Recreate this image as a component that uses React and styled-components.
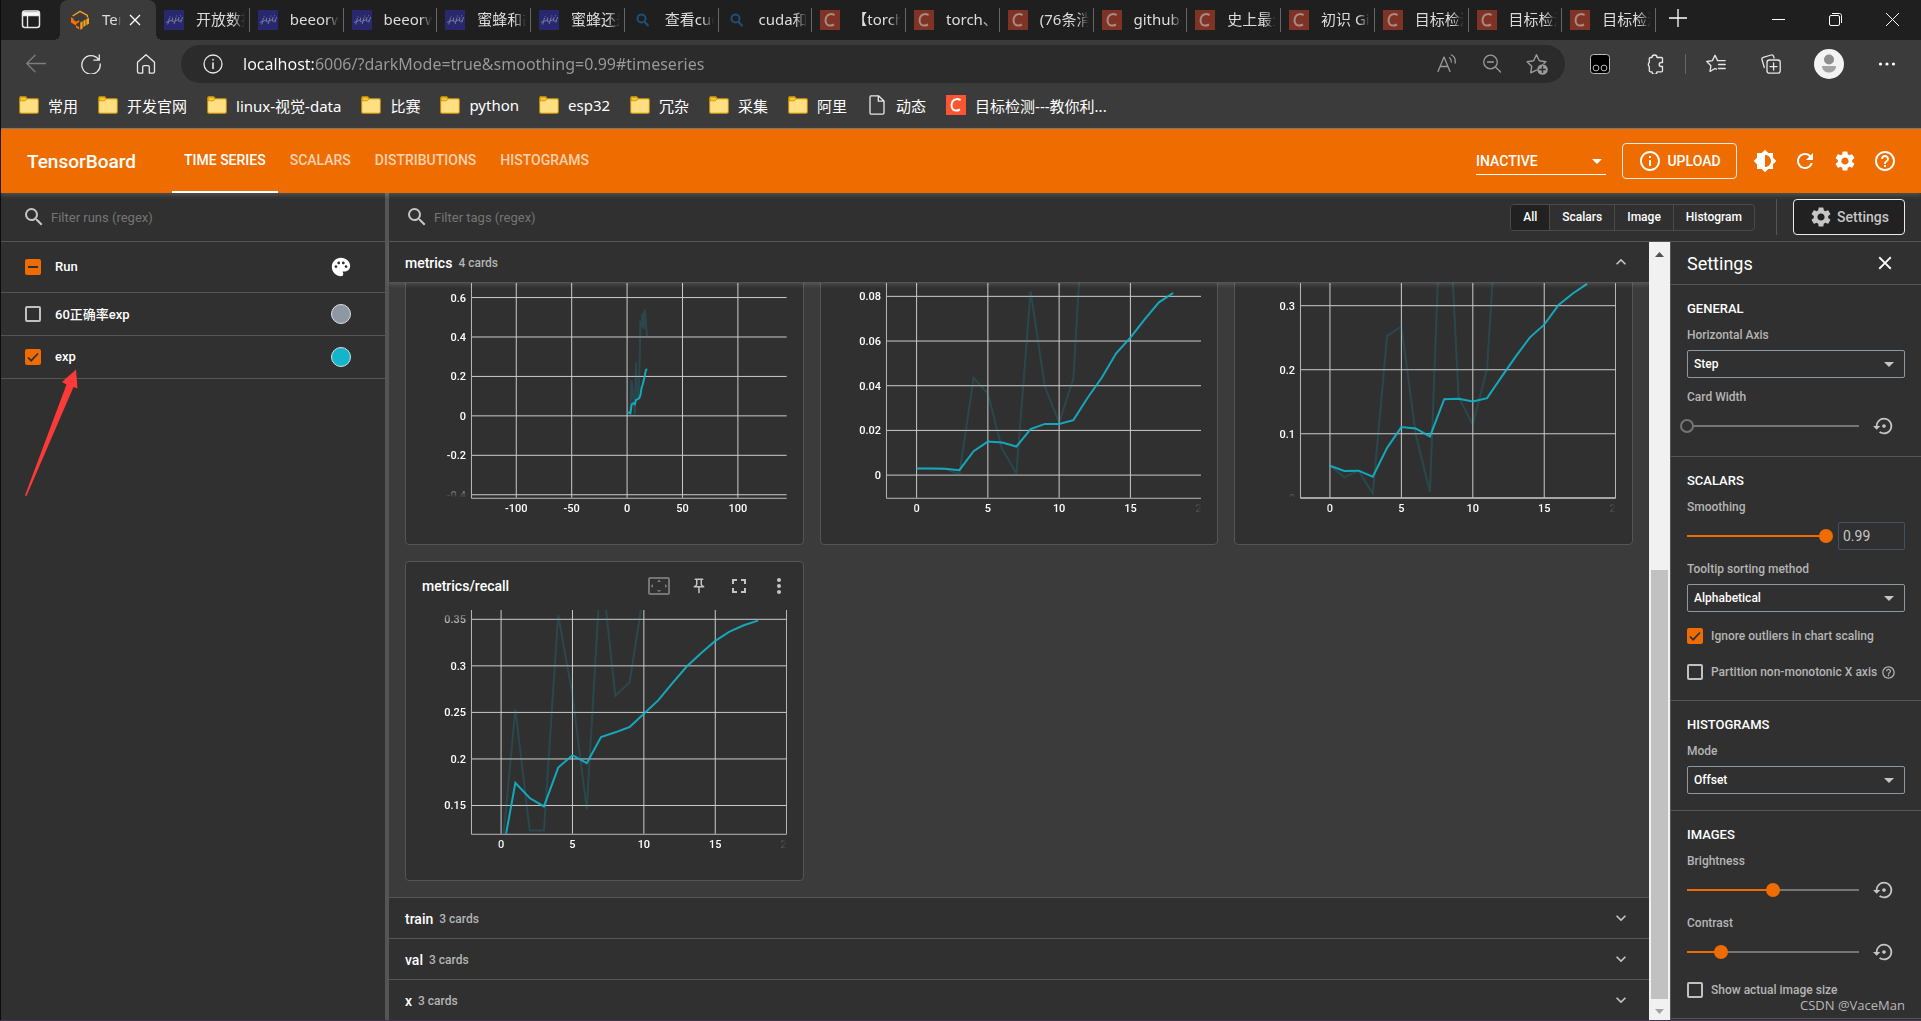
import React from "react";
import styled, { createGlobalStyle } from "styled-components";
import {
  MdSearch,
  MdPalette,
  MdBrightness6,
  MdRefresh,
  MdSettings,
  MdHelpOutline,
  MdInfoOutline,
  MdClose,
  MdExpandMore,
  MdExpandLess,
  MdFullscreen,
  MdMoreVert,
  MdOutlinePushPin,
  MdSettingsBackupRestore,
  MdSettingsOverscan,
  MdArrowDropDown,
} from "react-icons/md";

const GlobalStyle = createGlobalStyle`
  * {
    box-sizing: border-box;
  }

  body {
    margin: 0;
    background: #0b0b12;
    color: #fff;
    font-family: Roboto, "Noto Sans CJK SC", sans-serif;
    font-size: 13px;
  }

  button, input, select {
    font-family: inherit;
    color: inherit;
    margin: 0;
  }

  button {
    background: none;
    border: 0;
    padding: 0;
    cursor: pointer;
  }
`;

const line = "#555";

const Window = styled.div`
  display: flex;
  flex-direction: column;
  height: 100vh;
  padding-left: 1px;
  border-bottom: 1px solid #43364a;
  overflow: hidden;
`;

/* ---------- browser chrome ---------- */

const Browser = styled.div`
  flex: none;
  background: #3b3b3b;
  border-bottom: 1px solid #777;
  font-family: "Noto Sans", "Noto Sans CJK SC", sans-serif;
  font-size: 15px;
`;

const TabStrip = styled.div`
  display: flex;
  height: 40px;
  background: #1f1f1f;
`;

const TabMenuButton = styled.button`
  width: 59px;
  padding-top: 2px;
`;

const ActiveTab = styled.div`
  position: relative;
  display: flex;
  align-items: center;
  width: 96px;
  padding: 0 15px 0 10px;
  background: #3b3b3b;
  border-radius: 8px 8px 0 0;

  &::before,
  &::after {
    content: "";
    position: absolute;
    bottom: 0;
    width: 6px;
    height: 6px;
  }

  &::before {
    right: 100%;
    background: radial-gradient(circle at 0 0, #1f1f1f 6px, #3b3b3b 6px);
  }

  &::after {
    left: 100%;
    background: radial-gradient(circle at 100% 0, #1f1f1f 6px, #3b3b3b 6px);
  }
`;

const Tab = styled.div`
  display: flex;
  flex: 1;
  align-items: center;
  min-width: 0;
  padding-left: 8px;

  &::after {
    content: "";
    width: 1px;
    height: 24px;
    margin-left: 4px;
    background: #666;
  }
`;

const TabTitle = styled.span`
  flex: 1;
  min-width: 0;
  margin: 0 ${(p) => (p.$closable ? 8 : 0)}px 0 12px;
  padding-bottom: 2px;
  overflow: hidden;
  white-space: nowrap;
  line-height: 24px;
  color: #ddd;
  mask-image: linear-gradient(90deg, #000 75%, transparent);
`;

const WindowButtons = styled.div`
  display: flex;
  width: 265px;
  justify-content: space-between;
`;

const WindowButton = styled.button`
  width: ${(p) => (p.$wide ? "57px" : "44px")};
`;

const Toolbar = styled.div`
  display: flex;
  align-items: center;
  gap: 15px;
  height: 48px;
  padding: 0 14px 0 15px;
`;

const ToolButton = styled.button`
  display: flex;
  align-items: center;
  justify-content: center;
  width: ${(p) => p.$width || 40}px;
  height: 32px;
`;

const ToolDivider = styled.span`
  width: 1px;
  height: 20px;
  margin: 0 -5px;
  background: #666;
`;

const AddressBar = styled.label`
  display: flex;
  flex: 1;
  align-items: center;
  gap: 15px;
  height: 38px;
  padding: 0 13px 0 22px;
  border-radius: 19px;
  background: #2b2b2b;
`;

const AddressInput = styled.input`
  flex: 1;
  min-width: 0;
  padding: 0 5px;
  border: 0;
  outline: 0;
  font-size: 16px;
  color: #9a9a9a;
  background: linear-gradient(90deg, #fff 76px, #9a9a9a 76px);
  background-clip: text;
  -webkit-text-fill-color: transparent;
`;

const Bookmarks = styled.nav`
  display: flex;
  align-items: center;
  height: 40px;
  padding: 0 8px 6px;
`;

const Bookmark = styled.a`
  display: flex;
  align-items: center;
  gap: 9px;
  padding: 0 10px;
  color: #fff;
  text-decoration: none;
  white-space: nowrap;
`;

/* ---------- app header ---------- */

const Header = styled.header`
  position: relative;
  z-index: 3;
  display: flex;
  flex: none;
  align-items: center;
  height: 64px;
  padding: 0 16px 0 26px;
  background: #ef6c00;
  box-shadow: 0 2px 5px rgba(255, 255, 255, 0.18);
`;

const Brand = styled.h1`
  margin: 0 24px 0 0;
  width: 121px;
  font-size: 19px;
  font-weight: 500;
`;

const NavLink = styled.a`
  height: 64px;
  padding: 0 12px;
  border-bottom: 2px solid ${(p) => (p.$active ? "#fff" : "transparent")};
  line-height: 62px;
  font-size: 14px;
  font-weight: 500;
  text-transform: uppercase;
  text-decoration: none;
  color: ${(p) => (p.$active ? "#fff" : "rgba(255, 255, 255, 0.7)")};
`;

const Spacer = styled.span`
  flex: 1;
`;

const Stack = styled.span`
  display: grid;
  align-items: center;

  > * {
    grid-area: 1 / 1;
  }

  > svg {
    justify-self: end;
    pointer-events: none;
  }
`;

const InactiveSelect = styled.select`
  width: 130px;
  height: 28px;
  appearance: none;
  background: none;
  border: 0;
  border-bottom: 1px solid #fff;
  padding: 0;
  border-radius: 0;
  font-size: 14px;
  font-weight: 500;

  & + svg {
    margin-right: -3px;
  }
`;

const UploadButton = styled.button`
  display: flex;
  align-items: center;
  justify-content: center;
  gap: 5px;
  width: 115px;
  height: 36px;
  margin: 0 8px 0 16px;
  border: 1px solid #ebebeb;
  border-radius: 4px;
  font-size: 14px;
  font-weight: 500;
`;

const IconButton = styled.button`
  display: flex;
  align-items: center;
  justify-content: center;
  width: ${(p) => p.$width || 40}px;
  height: 40px;
  color: ${(p) => p.$color || "#fff"};
`;

/* ---------- layout ---------- */

const Body = styled.div`
  display: flex;
  flex: 1;
  min-height: 0;
  background: #303030;
`;

const Sidebar = styled.aside`
  position: relative;
  width: 20%;
`;

const Resizer = styled.div`
  width: 4px;
  background: #555;
`;

const Main = styled.main`
  display: flex;
  flex: 1;
  flex-direction: column;
  min-width: 0;
`;

const FilterBar = styled.div`
  display: flex;
  align-items: center;
  height: 49px;
  padding: 0 16px 0 ${(p) => p.$inset || 16}px;
  border-bottom: 1px solid ${line};
`;

const Filter = styled.label`
  display: flex;
  flex: 1;
  align-items: center;
  gap: 5px;
  color: #c5c5c5;
`;

const FilterInput = styled.input`
  flex: 1;
  min-width: 0;
  padding: 0;
  border: 0;
  outline: 0;
  background: none;
  font-size: 13px;

  &::placeholder {
    color: #757575;
  }
`;

/* ---------- runs ---------- */

const RunsTable = styled.table`
  width: 100%;
  border-collapse: collapse;
`;

const RunRow = styled.tr`
  height: ${(p) => (p.$head ? 50 : 43)}px;
  border-bottom: 1px solid ${line};
`;

const RunCell = styled.td`
  padding: 0;
  text-align: left;
  font-weight: 500;
  font-size: 13px;
`;

const CheckCell = styled(RunCell)`
  width: 54px;
  padding-left: 24px;
`;

const ColorCell = styled(RunCell)`
  width: 57px;
  padding-left: 2px;

  > * {
    display: block;
  }
`;

const Swatch = styled.button`
  width: 20px;
  height: 20px;
  margin-left: 1px;
  border: 1px solid #ddd;
  border-radius: 50%;
  background: ${(p) => p.$color};
`;

const CheckStack = styled(Stack)`
  width: 16px;
  height: 16px;
`;

const Box = styled.input`
  width: 16px;
  height: 16px;
  appearance: none;
  border: 2px solid #c1c1c1;
  border-radius: 2px;

  &:checked,
  &:indeterminate {
    background: #ef6c00;
    border-color: #ef6c00;
  }
`;

const Arrow = styled.svg`
  position: absolute;
  left: 23px;
  top: 175px;
  pointer-events: none;
`;

/* ---------- tag filter ---------- */

const ToggleGroup = styled.div`
  display: flex;
  height: 27px;
  margin-right: 21px;
  border: 1px solid #4a4a4a;
  border-radius: 4px;
  overflow: hidden;
`;

const Toggle = styled.button`
  padding: 0 12px;
  font-size: 12px;
  font-weight: 500;
  background: ${(p) => (p.$active ? "#212121" : "none")};

  & + & {
    border-left: 1px solid #4a4a4a;
  }
`;

const SettingsToggle = styled.button`
  display: flex;
  align-items: center;
  justify-content: center;
  gap: 4px;
  width: 112px;
  height: 36px;
  border: 1px solid #ebebeb;
  border-radius: 4px;
  background: #212121;
  color: #c5c5c5;
  font-size: 14px;
  font-weight: 500;
`;

const BarDivider = styled.span`
  width: 1px;
  height: 36px;
  margin-right: 16px;
  background: ${line};
`;

const Content = styled.div`
  display: flex;
  flex: 1;
  min-height: 0;
`;

const CardArea = styled.div`
  display: flex;
  flex: 1;
  flex-direction: column;
  min-width: 0;
`;

const GroupHeader = styled.button`
  display: flex;
  flex: none;
  align-items: center;
  gap: 6px;
  height: 41px;
  padding: 0 18px 0 16px;
  border-${(p) => (p.$open ? "bottom" : "top")}: 1px solid ${line};
  background: #303030;
  position: relative;
  z-index: 1;
  box-shadow: ${(p) => (p.$open ? "0 2px 4px rgba(255, 255, 255, 0.14)" : "none")};

  > svg {
    margin-left: auto;
    color: #c5c5c5;
  }
`;

const GroupName = styled.span`
  padding-top: 2px;
  font-size: 14px;
  font-weight: 500;
`;

const GroupCount = styled.span`
  padding-top: 2px;
  font-size: 12px;
  font-weight: 500;
  color: #b5b5b5;
`;

const GroupBody = styled.div`
  display: flex;
  flex: 1;
  flex-direction: column;
  justify-content: flex-end;
  min-height: 0;
  overflow: hidden;
  background: #3b3b3b;
`;

const CardGrid = styled.div`
  display: grid;
  grid-template-columns: repeat(3, 1fr);
  gap: 16px;
  padding: 16px;
`;

const Card = styled.article`
  height: 320px;
  padding: 4px 4px 16px 16px;
  border: 1px solid ${line};
  border-radius: 4px;
  background: #303030;
`;

const CardHeader = styled.div`
  display: flex;
  align-items: center;
  height: 40px;
  margin-bottom: 4px;
`;

const CardTitle = styled.h2`
  flex: 1;
  margin: 0;
  font-size: 14px;
  font-weight: 500;
`;

const Plot = styled.svg`
  display: block;
  width: calc(100% - 12px);
  overflow: hidden;
  font-size: 11px;
  font-weight: 500;
  fill: #fff;
`;

const Scrollbar = styled.div`
  display: flex;
  flex-direction: column;
  align-items: center;
  width: 21px;
  background: #f1f1f1;
`;

const ScrollButton = styled.button`
  width: 100%;
  height: 21px;
  color: ${(p) => (p.$dim ? "#a3a3a3" : "#505050")};
`;

const ScrollTrack = styled.div`
  display: flex;
  flex: 1;
  flex-direction: column;
  width: 17px;

  &::before {
    content: "";
    flex: 5;
  }
`;

const ScrollThumb = styled.div`
  flex: 7;
  background: #c1c1c1;
`;

/* ---------- settings pane ---------- */

const Pane = styled.aside`
  position: relative;
  width: 251px;
  border-left: 1px solid ${line};
  overflow: hidden;
`;

const PaneHeader = styled.div`
  display: flex;
  align-items: center;
  justify-content: space-between;
  height: 43px;
  padding: 0 16px;
  border-bottom: 1px solid ${line};
`;

const PaneTitle = styled.h2`
  margin: 0;
  font-size: 18px;
  font-weight: 400;
`;

const Section = styled.section`
  padding: 16px;
  border-bottom: 1px solid ${line};
`;

const SectionTitle = styled.h3`
  margin: 0 0 10px;
  line-height: 16px;
  font-size: 13px;
  font-weight: 500;
  text-transform: uppercase;
`;

const Field = styled.div`
  & + & {
    margin-top: 11px;
  }
`;

const FieldLabel = styled.label`
  display: block;
  margin-bottom: 7px;
  line-height: 16px;
  font-size: 12px;
  font-weight: 500;
  color: #b5b5b5;
`;

const FieldRow = styled.div`
  display: flex;
  align-items: center;
  justify-content: space-between;
  height: 28px;
`;

const Select = styled.select`
  width: 100%;
  height: 28px;
  padding: 0 6px;
  appearance: none;
  border: 1px solid #8e98a3;
  border-radius: 2px;
  background: none;
  font-size: 12px;
  font-weight: 500;

  & + svg {
    margin-right: 4px;
    color: #c5c5c5;
  }
`;

const Range = styled.input`
  flex: 1;
  min-width: 0;
  height: 14px;
  margin: 0 ${(p) => p.$gap - 7}px 0 -7px;
  appearance: none;
  background: linear-gradient(
      90deg,
      #ef6c00 ${(p) => p.$fill}%,
      #757575 ${(p) => p.$fill}%
    )
    center / calc(100% - 14px) 2px no-repeat;

  &::-webkit-slider-thumb {
    appearance: none;
    width: 14px;
    height: 14px;
    border: 2px solid ${(p) => (p.$fill ? "#ef6c00" : "#757575")};
    border-radius: 50%;
    background: ${(p) => (p.$fill ? "#ef6c00" : "#303030")};
  }
`;

const NumberInput = styled.input`
  width: 67px;
  height: 28px;
  padding: 0 4px;
  border: 1px solid #425066;
  border-radius: 2px;
  background: none;
  color: #c5c5c5;
  font-size: 14px;

  &::-webkit-inner-spin-button {
    appearance: none;
  }
`;

const CheckRow = styled.label`
  display: flex;
  align-items: center;
  gap: 8px;
  height: 24px;
  margin-top: 12px;
  font-size: 12px;
  font-weight: 500;
  color: #b5b5b5;
  white-space: nowrap;

  > svg {
    margin-left: -4px;
  }
`;

const Watermark = styled.span`
  position: absolute;
  right: 16px;
  bottom: 6px;
  font-family: "Open Sans", "Noto Sans", sans-serif;
  font-size: 13px;
  color: #b9b9b9;
`;

/* ---------- icons ---------- */

const Stroke = ({ size = 20, children, color = "#e8e8e8", ...rest }) => (
  <svg
    width={size}
    height={size}
    viewBox="0 0 20 20"
    fill="none"
    stroke={color}
    strokeWidth="1.3"
    strokeLinecap="round"
    strokeLinejoin="round"
    {...rest}
  >
    {children}
  </svg>
);

const TensorIcon = () => (
  <svg width="20" height="20" viewBox="0 0 20 20">
    <path d="M2.600 6 10 1.400l7.400 4v2.200" fill="none" stroke="#f9a01b" strokeWidth="1.400" />
    <path d="M1 7.200l2.600 1.500v1.400l2.700 1.600 2.900-1.800v2.200l-3 1.900v1.400l3 1.700V19.600L6 17.600v-2L1 12.600z" fill="#ff6f00" />
    <path d="M10.300 12.400l2.300-1.300v7.400l-2.300 1.300zM13.400 10.700l2.200-1.200v6.300l-2.200 1.200zM16.300 9.200 19 7.600v6.200l-2.700 1.500z" fill="#f9a01b" />
  </svg>
);

const PaddleIcon = () => (
  <svg width="20" height="20" viewBox="0 0 20 20">
    <rect width="20" height="20" fill="#28286e" />
    <g fill="none" stroke="#77779c" strokeWidth="1">
      <path d="M2 12.500l3-1.500M5.500 8l-1.800 6.500M4.800 11.500 8 10M8.800 7.500l-.6 4c1 .8 2.200.2 2.800-1M12 7.500l-1.800 6.500M11 11l3.500-1.500M15 7l-.6 4c1 .8 2.200.2 3-1M18.600 7l-1.800 5.500M5.600 6.800h1M12.200 6h1M16 5.800h1" />
    </g>
  </svg>
);

const LookupIcon = () => (
  <Stroke color="#1d4f7c" strokeWidth="2">
    <circle cx="8.500" cy="8.500" r="4" />
    <path d="M11.500 11.800l3.500 3.700" />
  </Stroke>
);

const CsdnIcon = ({ bright }) => (
  <svg width="20" height="20" viewBox="0 0 20 20">
    <rect width="20" height="20" fill={bright ? "#fc5531" : "#7f3325"} />
    <path
      d="M14.600 5.200c-2.600-1.600-6.300-1.600-8 1.200-1.500 2.500-1.500 6.300.5 8.100 1.800 1.500 4.600 1.200 6.900 0"
      fill="none"
      stroke={bright ? "#fff" : "#a98a84"}
      strokeWidth="2"
    />
  </svg>
);

const FolderIcon = () => (
  <svg width="20" height="18" viewBox="0 0 20 18">
    <path d="M.6 2.200C.6 1.200 1.200.6 2.200.6h4.300l2 2h9.300c1 0 1.600.6 1.600 1.600v11.600c0 1-.6 1.600-1.600 1.600H2.200c-1 0-1.600-.6-1.600-1.600z" fill="#ffdf82" stroke="#b8870f" strokeWidth="1.100" />
    <path d="M1.200 4.800V2.200c0-.7.300-1 1-1h4.100l1.700 1.700-1.700 1.900z" fill="#f8c820" stroke="#b8870f" strokeWidth="0.700" />
  </svg>
);

const FileIcon = () => (
  <Stroke>
    <path d="M4 .8h7.500L17 6v11.800c0 .9-.5 1.400-1.400 1.400H4.400C3.500 19.200 3 18.700 3 17.800V2.200C3 1.300 3.300.8 4 .8zM11.300 1v5.200H17" />
  </Stroke>
);

const CheckMark = () => (
  <svg width="16" height="16" viewBox="0 0 16 16">
    <path d="M3 8.500l3.200 3.200L13 4.500" fill="none" stroke="#303030" strokeWidth="1.700" />
  </svg>
);

const DashMark = () => (
  <svg width="16" height="16" viewBox="0 0 16 16">
    <path d="M3 8h10" stroke="#303030" strokeWidth="2" />
  </svg>
);

/* ---------- data ---------- */

const icons = { paddle: PaddleIcon, lookup: LookupIcon, csdn: CsdnIcon };

const tabs = [
  ["paddle", "开放数据"],
  ["paddle", "beeorw"],
  ["paddle", "beeorw"],
  ["paddle", "蜜蜂和胡"],
  ["paddle", "蜜蜂还是"],
  ["lookup", "查看cuda"],
  ["lookup", "cuda和"],
  ["csdn", "【torch"],
  ["csdn", "torch、"],
  ["csdn", "(76条消"],
  ["csdn", "github-"],
  ["csdn", "史上最全"],
  ["csdn", "初识 Git"],
  ["csdn", "目标检测"],
  ["csdn", "目标检测"],
  ["csdn", "目标检测"],
];

const folders = ["常用", "开发官网", "linux-视觉-data", "比赛", "python", "esp32", "冗杂", "采集", "阿里"];

const charts = [
  {
    x: [-140, 144],
    y: [-0.4154, 0.7194],
    xTicks: [-100, -50, 0, 50, 100],
    yTicks: [0.6, 0.4, 0.2, 0, -0.2, -0.4],
    smooth: [0.017, 0.017, 0.016, 0.014, 0.056, 0.063, 0.064, 0.059, 0.08, 0.084, 0.086, 0.09, 0.105, 0.14, 0.158, 0.18, 0.205, 0.233, 0.238],
    raw: [0.017, 0.017, 0.015, 0.003, 0.18, 0.13, 0.07, 0.005, 0.27, 0.1, 0.09, 0.2, 0.47, 0.46, 0.52, 0.44, 0.54, 0.47, 0.4],
  },
  {
    x: [-2.08, 20],
    y: [-0.01015, 0.09],
    xTicks: [0, 5, 10, 15, 20],
    yTicks: [0.08, 0.06, 0.04, 0.02, 0],
    smooth: [0.003, 0.003, 0.0028, 0.0022, 0.0107, 0.015, 0.0146, 0.0128, 0.0206, 0.0229, 0.0229, 0.0246, 0.0346, 0.0437, 0.0545, 0.0615, 0.0697, 0.0773, 0.0815],
    raw: [0.003, 0.003, 0.0028, 0.0004, 0.0435, 0.0365, 0.0116, 0.0009, 0.0822, 0.0396, 0.0235, 0.0432, 0.152],
  },
  {
    x: [-2.03, 20],
    y: [0, 0.3495],
    xTicks: [0, 5, 10, 15, 20],
    yTicks: [0.3, 0.2, 0.1, 0],
    smooth: [0.05, 0.0418, 0.0423, 0.033, 0.078, 0.1104, 0.1083, 0.0958, 0.154, 0.1545, 0.1504, 0.1556, 0.1885, 0.2205, 0.2506, 0.2704, 0.301, 0.319, 0.334],
    raw: [0.05, 0.032, 0.0423, 0.0065, 0.2525, 0.268, 0.0997, 0.009, 0.61, 0.158, 0.114, 0.202, 0.56],
  },
  {
    title: "metrics/recall",
    x: [-2.04, 20],
    y: [0.1196, 0.36],
    xTicks: [0, 5, 10, 15, 20],
    yTicks: [0.35, 0.3, 0.25, 0.2, 0.15],
    smooth: [0.09, 0.1743, 0.158, 0.149, 0.1907, 0.204, 0.1954, 0.2236, 0.2286, 0.2343, 0.2486, 0.2629, 0.2814, 0.2993, 0.3136, 0.3268, 0.3368, 0.3436, 0.3486],
    raw: [0.09, 0.2536, 0.1232, 0.1232, 0.3546, 0.269, 0.1457, 0.41, 0.268, 0.2825, 0.38],
  },
];

/* ---------- components ---------- */

const LEFT = 50;
const WIDTH = 365;
const HEIGHT = 224;

const Chart = ({ chart, id }) => {
  const sx = (v) => LEFT + ((v - chart.x[0]) / (chart.x[1] - chart.x[0])) * (WIDTH - LEFT);
  const sy = (v) => HEIGHT - ((v - chart.y[0]) / (chart.y[1] - chart.y[0])) * HEIGHT;
  const points = (values) => values.map((v, i) => `${sx(i)},${sy(v)}`).join(" ");

  return (
    <Plot viewBox={`0 0 ${WIDTH} 244`}>
      <defs>
        <clipPath id={`clip-${id}`}>
          <rect x={LEFT} width={WIDTH - LEFT} height={HEIGHT} />
        </clipPath>
        <linearGradient id={`fade-y-${id}`} x2="0" y2="1">
          <stop offset="0" stopColor="#000" />
          <stop offset="0.08" stopColor="#fff" />
          <stop offset="0.92" stopColor="#fff" />
          <stop offset="1" stopColor="#000" />
        </linearGradient>
        <linearGradient id={`fade-x-${id}`}>
          <stop offset="0" stopColor="#000" />
          <stop offset="0.1" stopColor="#fff" />
          <stop offset="0.9" stopColor="#fff" />
          <stop offset="1" stopColor="#000" />
        </linearGradient>
        <mask id={`mask-y-${id}`} maskUnits="userSpaceOnUse" x="0" y="0" width={LEFT} height={HEIGHT}>
          <rect width={LEFT} height={HEIGHT} fill={`url(#fade-y-${id})`} />
        </mask>
        <mask id={`mask-x-${id}`} maskUnits="userSpaceOnUse" x={LEFT} y={HEIGHT} width={WIDTH - LEFT} height="20">
          <rect x={LEFT} y={HEIGHT} width={WIDTH - LEFT} height="20" fill={`url(#fade-x-${id})`} />
        </mask>
      </defs>
      <g stroke="#ccc" strokeWidth="1">
        {chart.xTicks.map((t) => (
          <line key={t} x1={sx(t)} x2={sx(t)} y1="0" y2={HEIGHT} />
        ))}
        {chart.yTicks.map((t) => (
          <line key={t} x1={LEFT} x2={WIDTH} y1={sy(t)} y2={sy(t)} />
        ))}
        <path d={`M${LEFT - 0.5} 0V${HEIGHT + 0.5}H${WIDTH}`} fill="none" stroke="#bbb" />
      </g>
      <g clipPath={`url(#clip-${id})`} fill="none" stroke="#12b5cb" strokeWidth="2">
        <polyline points={points(chart.raw)} opacity="0.18" />
        <polyline points={points(chart.smooth)} opacity="0.9" />
      </g>
      <g mask={`url(#mask-y-${id})`} textAnchor="end">
        {chart.yTicks.map((t) => (
          <text key={t} x="44" y={sy(t) + 4}>{t}</text>
        ))}
      </g>
      <g mask={`url(#mask-x-${id})`} textAnchor="middle">
        {chart.xTicks.map((t) => (
          <text key={t} x={sx(t)} y={HEIGHT + 14}>{t}</text>
        ))}
      </g>
    </Plot>
  );
};

const ChartCard = ({ chart, id }) => (
  <Card>
    <CardHeader>
      {chart.title && (
        <>
          <CardTitle>{chart.title}</CardTitle>
          <IconButton $color="#757575" aria-label="Fit domain"><MdSettingsOverscan size={24} /></IconButton>
          <IconButton $color="#c5c5c5" aria-label="Pin card"><MdOutlinePushPin size={18} /></IconButton>
          <IconButton $color="#c5c5c5" aria-label="Full size"><MdFullscreen size={24} /></IconButton>
          <IconButton $color="#c5c5c5" aria-label="More options"><MdMoreVert size={24} /></IconButton>
        </>
      )}
    </CardHeader>
    <Chart chart={chart} id={id} />
  </Card>
);

const Checkbox = ({ checked, mixed, ...rest }) => (
  <CheckStack>
    <Box
      type="checkbox"
      defaultChecked={checked}
      ref={(el) => {
        if (el && mixed) el.indeterminate = true;
      }}
      {...rest}
    />
    {checked && <CheckMark />}
    {mixed && <DashMark />}
  </CheckStack>
);

const Group = ({ name, count, open }) => (
  <GroupHeader $open={open}>
    <GroupName>{name}</GroupName>
    <GroupCount>{count} cards</GroupCount>
    {open ? <MdExpandLess size={20} /> : <MdExpandMore size={20} />}
  </GroupHeader>
);

const SelectField = ({ id, label, value }) => (
  <Field>
    <FieldLabel htmlFor={id}>{label}</FieldLabel>
    <Stack>
      <Select id={id} defaultValue={value}>
        <option>{value}</option>
      </Select>
      <MdArrowDropDown size={24} />
    </Stack>
  </Field>
);

const SliderField = ({ id, label, fill, number }) => (
  <Field>
    <FieldLabel htmlFor={id}>{label}</FieldLabel>
    <FieldRow>
      <Range id={id} type="range" min="0" max="100" defaultValue={fill} $fill={fill} $gap={number ? 11 : 4} />
      {number ? (
        <NumberInput type="number" defaultValue={number} aria-label={label} />
      ) : (
        <IconButton $color="#c5c5c5" $width={42} aria-label={`Reset ${label}`}>
          <MdSettingsBackupRestore size={22} />
        </IconButton>
      )}
    </FieldRow>
  </Field>
);

const BrowserChrome = () => (
  <Browser>
    <TabStrip>
      <TabMenuButton aria-label="Tab actions">
        <Stroke size={20}>
          <rect x="1.500" y="2" width="17" height="16.500" rx="2.500" strokeWidth="1.500" />
          <path d="M2 3.500h16v3H2z" fill="#fff" />
          <path d="M6.500 7v11" />
        </Stroke>
      </TabMenuButton>
      <ActiveTab>
        <TensorIcon />
        <TabTitle $closable>Ten</TabTitle>
        <svg width="12" height="12" viewBox="0 0 12 12" stroke="#fff" strokeWidth="1.300">
          <path d="M1 1l10 10M11 1L1 11" />
        </svg>
      </ActiveTab>
      {tabs.map(([icon, title], i) => {
        const Icon = icons[icon];
        return (
          <Tab key={i}>
            <Icon />
            <TabTitle>{title}</TabTitle>
          </Tab>
        );
      })}
      <WindowButtons>
        <WindowButton aria-label="New tab">
          <svg width="18" height="18" viewBox="0 0 18 18" stroke="#fff" strokeWidth="1.300">
            <path d="M9 0v18M0 9h18" />
          </svg>
        </WindowButton>
        <div>
          <WindowButton $wide aria-label="Minimize">
            <svg width="13" height="40" viewBox="0 0 13 40" stroke="#fff"><path d="M0 19.500h13" /></svg>
          </WindowButton>
          <WindowButton $wide aria-label="Restore">
            <svg width="13" height="40" viewBox="0 0 13 40" fill="none" stroke="#fff">
              <rect x="0.500" y="15.500" width="10" height="10" rx="1.500" />
              <path d="M3 13.500h7.500c1 0 2 1 2 2V23" />
            </svg>
          </WindowButton>
          <WindowButton $wide aria-label="Close window">
            <svg width="13" height="40" viewBox="0 0 13 40" stroke="#fff"><path d="M0 13l13 13M13 13L0 26" /></svg>
          </WindowButton>
        </div>
      </WindowButtons>
    </TabStrip>

    <Toolbar>
      <ToolButton aria-label="Back">
        <Stroke color="#7c7c7c"><path d="M19.500 9.500H.8M9 1.200.7 9.500 9 17.800" /></Stroke>
      </ToolButton>
      <ToolButton aria-label="Reload">
        <Stroke><path d="M17.500 5.500A9.200 9.200 0 1 0 19.200 10M18.300.8v5.400h-5.400" /></Stroke>
      </ToolButton>
      <ToolButton aria-label="Home">
        <Stroke><path d="M1.500 8.300 10 .8l8.500 7.500v9.400c0 .9-.5 1.400-1.400 1.400h-3.800v-6c0-.9-.5-1.400-1.400-1.400H8.100c-.9 0-1.400.5-1.400 1.400v6H2.900c-.9 0-1.400-.5-1.400-1.400z" /></Stroke>
      </ToolButton>
      <AddressBar>
        <Stroke><circle cx="10" cy="10" r="9" /><path d="M10 9v5.500M10 5.600v.4" strokeWidth="1.600" /></Stroke>
        <AddressInput defaultValue="localhost:6006/?darkMode=true&smoothing=0.99#timeseries" aria-label="Address" />
        <ToolButton $width={30} aria-label="Read aloud">
          <Stroke color="#9a9a9a"><path d="M1 17.500 7 3l6 14.500M3 12.500h8M12.500 3.800c1.500 1 2 2.500 1.800 4.200M14.500 1c3 1.600 4.300 4.500 3.700 8" /></Stroke>
        </ToolButton>
        <ToolButton $width={30} aria-label="Zoom out">
          <Stroke color="#9a9a9a"><circle cx="8.500" cy="8" r="6.800" /><path d="M13.500 13l5 5M5.500 8h6" /></Stroke>
        </ToolButton>
        <ToolButton $width={30} aria-label="Add to favorites">
          <Stroke size={22} color="#9a9a9a">
            <path d="M9.500 15.500 4.300 18l.9-5.900L1 7.900l5.900-.9 2.600-5.400L12.200 7l5.800.9-1.700 1.700" />
            <circle cx="15" cy="15" r="4.800" fill="#9a9a9a" stroke="none" />
            <path d="M15 12.500v5M12.500 15h5" stroke="#2b2b2b" />
          </Stroke>
        </ToolButton>
      </AddressBar>
      <ToolButton aria-label="Scripts extension">
        <svg width="20" height="20" viewBox="0 0 20 20" fill="#000" stroke="#bbb">
          <rect x="0.500" y="0.500" width="19" height="19" rx="3" />
          <circle cx="6" cy="14" r="2.900" />
          <circle cx="14" cy="14" r="2.900" />
        </svg>
      </ToolButton>
      <ToolButton aria-label="Extensions">
        <Stroke><path d="M7 3.500a2.500 2.500 0 0 1 5 0h4.500c.7 0 1 .3 1 1v4h-1.300a2 2 0 0 0 0 4h1.300v4.200c0 .8-.3 1.100-1 1.100H12a2.500 2.500 0 0 1-5 0H5.500c-.8 0-1.200-.3-1.200-1.100v-4.200a2.500 2.500 0 0 1 0-4v-4c0-.7.400-1 1.200-1z" /></Stroke>
      </ToolButton>
      <ToolDivider />
      <ToolButton aria-label="Favorites">
        <Stroke><path d="M10.500 15.200 9 14.500l-5 3 .9-5.700L.8 7.500l5.600-.9L9 1.300l2.600 5.300h7.600M12.500 10.500h6.700M12.500 14.500h6.700" /></Stroke>
      </ToolButton>
      <ToolButton aria-label="Collections">
        <Stroke>
          <path d="M3.300 13.500 1 5.500c-.3-1 .2-2 1.200-2.200l8-2.300c1-.3 2 .2 2.300 1.200l.6 1.800" />
          <rect x="6" y="6" width="13.200" height="13.200" rx="2.500" />
          <path d="M12.600 9v7M9 12.600h7" />
        </Stroke>
      </ToolButton>
      <ToolButton $width={46} aria-label="Profile">
        <svg width="30" height="30" viewBox="0 0 30 30">
          <circle cx="15" cy="15" r="15" fill="#f3f3f3" />
          <circle cx="15" cy="10.500" r="5" fill="#8d8d8d" />
          <path d="M8 17h14c0 4-3 6.500-7 6.500S8 21 8 17z" fill="#a3a3a3" />
        </svg>
      </ToolButton>
      <ToolButton aria-label="Menu">
        <svg width="18" height="4" viewBox="0 0 18 4" fill="#fff">
          <circle cx="2.500" cy="2" r="1.600" />
          <circle cx="9" cy="2" r="1.600" />
          <circle cx="15.500" cy="2" r="1.600" />
        </svg>
      </ToolButton>
    </Toolbar>

    <Bookmarks>
      {folders.map((name) => (
        <Bookmark key={name} href="#"><FolderIcon />{name}</Bookmark>
      ))}
      <Bookmark href="#"><FileIcon />动态</Bookmark>
      <Bookmark href="#"><CsdnIcon bright />目标检测---教你利...</Bookmark>
    </Bookmarks>
  </Browser>
);

const Runs = () => (
  <Sidebar>
    <FilterBar $inset={21}>
      <Filter>
        <MdSearch size={24} />
        <FilterInput placeholder="Filter runs (regex)" aria-label="Filter runs" />
      </Filter>
    </FilterBar>
    <RunsTable>
      <thead>
        <RunRow $head>
          <CheckCell as="th"><Checkbox mixed aria-label="All runs" /></CheckCell>
          <RunCell as="th">Run</RunCell>
          <ColorCell as="th"><MdPalette size={22} /></ColorCell>
        </RunRow>
      </thead>
      <tbody>
        <RunRow>
          <CheckCell><Checkbox aria-label="60正确率exp" /></CheckCell>
          <RunCell>60正确率exp</RunCell>
          <ColorCell><Swatch $color="#8e98a3" aria-label="Change color" /></ColorCell>
        </RunRow>
        <RunRow>
          <CheckCell><Checkbox checked aria-label="exp" /></CheckCell>
          <RunCell>exp</RunCell>
          <ColorCell><Swatch $color="#12b5cb" aria-label="Change color" /></ColorCell>
        </RunRow>
      </tbody>
    </RunsTable>
    <Arrow width="56" height="130" viewBox="0 0 56 130">
      <path d="M52 1.500 53.500 20.500 49.500 19 2.500 128 1 127.500 42.500 16.500 38 14z" fill="#fd3a39" />
    </Arrow>
  </Sidebar>
);

const Settings = () => (
  <Pane>
    <PaneHeader>
      <PaneTitle>Settings</PaneTitle>
      <IconButton aria-label="Close settings"><MdClose size={22} /></IconButton>
    </PaneHeader>
    <Section>
      <SectionTitle>General</SectionTitle>
      <SelectField id="axis" label="Horizontal Axis" value="Step" />
      <SliderField id="card-width" label="Card Width" fill={0} />
    </Section>
    <Section>
      <SectionTitle>Scalars</SectionTitle>
      <SliderField id="smoothing" label="Smoothing" fill={99} number="0.99" />
      <SelectField id="tooltip-sort" label="Tooltip sorting method" value="Alphabetical" />
      <CheckRow><Checkbox checked />Ignore outliers in chart scaling</CheckRow>
      <CheckRow><Checkbox />Partition non-monotonic X axis <MdHelpOutline size={15} /></CheckRow>
    </Section>
    <Section>
      <SectionTitle>Histograms</SectionTitle>
      <SelectField id="mode" label="Mode" value="Offset" />
    </Section>
    <Section>
      <SectionTitle>Images</SectionTitle>
      <SliderField id="brightness" label="Brightness" fill={50} />
      <SliderField id="contrast" label="Contrast" fill={20} />
      <CheckRow><Checkbox />Show actual image size</CheckRow>
    </Section>
    <Watermark>CSDN @VaceMan</Watermark>
  </Pane>
);

const App = () => (
  <Window>
    <GlobalStyle />
    <BrowserChrome />
    <Header>
      <Brand>TensorBoard</Brand>
      <NavLink href="#timeseries" $active>Time Series</NavLink>
      <NavLink href="#scalars">Scalars</NavLink>
      <NavLink href="#distributions">Distributions</NavLink>
      <NavLink href="#histograms">Histograms</NavLink>
      <Spacer />
      <Stack>
        <InactiveSelect aria-label="Inactive dashboards" defaultValue="INACTIVE">
          <option>INACTIVE</option>
        </InactiveSelect>
        <MdArrowDropDown size={24} />
      </Stack>
      <UploadButton><MdInfoOutline size={24} />UPLOAD</UploadButton>
      <IconButton aria-label="Toggle dark mode"><MdBrightness6 size={24} /></IconButton>
      <IconButton aria-label="Reload data"><MdRefresh size={24} /></IconButton>
      <IconButton aria-label="Preferences"><MdSettings size={24} /></IconButton>
      <IconButton aria-label="Help"><MdHelpOutline size={24} /></IconButton>
    </Header>
    <Body>
      <Runs />
      <Resizer />
      <Main>
        <FilterBar>
          <Filter>
            <MdSearch size={24} />
            <FilterInput placeholder="Filter tags (regex)" aria-label="Filter tags" />
          </Filter>
          <ToggleGroup>
            <Toggle $active>All</Toggle>
            <Toggle>Scalars</Toggle>
            <Toggle>Image</Toggle>
            <Toggle>Histogram</Toggle>
          </ToggleGroup>
          <BarDivider />
          <SettingsToggle><MdSettings size={24} />Settings</SettingsToggle>
        </FilterBar>
        <Content>
          <CardArea>
            <Group name="metrics" count={4} open />
            <GroupBody>
              <CardGrid>
                {charts.map((chart, i) => (
                  <ChartCard key={i} chart={chart} id={i} />
                ))}
              </CardGrid>
            </GroupBody>
            <Group name="train" count={3} />
            <Group name="val" count={3} />
            <Group name="x" count={3} />
          </CardArea>
          <Scrollbar>
            <ScrollButton aria-label="Scroll up">
              <svg width="9" height="5" viewBox="0 0 9 5"><path d="M0 5 4.500 0 9 5z" fill="currentColor" /></svg>
            </ScrollButton>
            <ScrollTrack><ScrollThumb /></ScrollTrack>
            <ScrollButton $dim aria-label="Scroll down">
              <svg width="9" height="5" viewBox="0 0 9 5"><path d="M0 0 4.500 5 9 0z" fill="currentColor" /></svg>
            </ScrollButton>
          </Scrollbar>
          <Settings />
        </Content>
      </Main>
    </Body>
  </Window>
);

export default App;
